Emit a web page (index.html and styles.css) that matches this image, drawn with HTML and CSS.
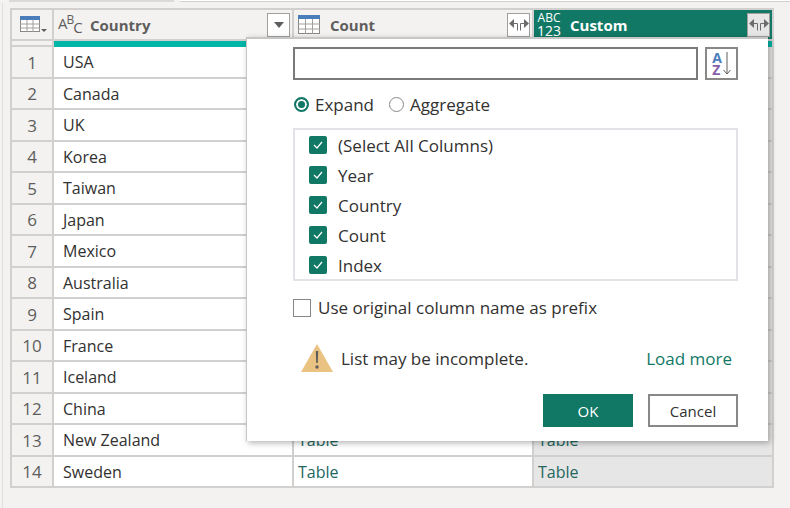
FILE: index.html
```html
<!DOCTYPE html>
<html lang="en">

<head>
    <meta charset="UTF-8">
    <title>Expand column</title>
    <link rel="stylesheet" href="styles.css">
</head>

<body>
    <div class="top-strip">
        <div class="strip-tab"></div>
        <div class="strip-bar"></div>
    </div>

    <div class="page">
        <div class="grid">
            <!-- header row -->
            <div class="head head-index">
                <svg width="27" height="17" viewBox="0 0 27 17">
                    <rect x="0.500" y="0.500" width="19" height="15" fill="#fff" stroke="#8a8886"/>
                    <rect x="0" y="0" width="20" height="4" fill="#4a7ebb"/>
                    <path d="M0 8h20M0 12h20M7 4v12M13 4v12" stroke="#a19f9d" fill="none"/>
                    <path d="M21 13h6l-3 3z" fill="#605e5c"/>
                </svg>
            </div>
            <div class="head">
                <span class="type-abc">A<sup>B</sup><sub>C</sub></span>
                <span class="head-title">Country</span>
                <span class="head-btn">
                    <svg width="10" height="6" viewBox="0 0 10 6"><path d="M0 0h10L5 6z" fill="#605e5c"/></svg>
                </span>
            </div>
            <div class="head">
                <svg class="type-table" width="22" height="19" viewBox="0 0 22 19">
                    <rect x="0.500" y="0.500" width="21" height="18" fill="#fff" stroke="#8a8886"/>
                    <rect x="0" y="0" width="22" height="4" fill="#4a7ebb"/>
                    <path d="M0 9h22M0 14h22M7.500 4v15M14.500 4v15" stroke="#a19f9d" fill="none"/>
                </svg>
                <span class="head-title">Count</span>
                <span class="head-btn">
                    <svg width="20" height="14" viewBox="0 0 20 14"><use href="#expand-icon"/></svg>
                </span>
            </div>
            <div class="head head-active">
                <span class="type-any"><span class="type-any-top">ABC</span><span class="type-any-low">123</span></span>
                <span class="head-title">Custom</span>
                <span class="head-btn">
                    <svg width="20" height="14" viewBox="0 0 20 14">
                        <g id="expand-icon" fill="#6e6c6a">
                            <path d="M0 5.500 5 1v9z"/>
                            <path d="M20 5.500 15 1v9z"/>
                            <path d="M5 5.500h3.500v7M15 5.500h-3.500v7" fill="none" stroke="#6e6c6a"/>
                        </g>
                    </svg>
                </span>
            </div>

            <!-- quality bar row -->
            <div class="quality-index"></div>
            <div class="quality-bar"></div>
            <div class="quality-bar"></div>
            <div class="quality-bar"></div>

            <!-- data rows -->
            <div class="num">1</div><div class="cell">USA</div><div class="cell"></div><div class="cell shade"></div>
            <div class="num">2</div><div class="cell">Canada</div><div class="cell"></div><div class="cell shade"></div>
            <div class="num">3</div><div class="cell">UK</div><div class="cell"></div><div class="cell shade"></div>
            <div class="num">4</div><div class="cell">Korea</div><div class="cell"></div><div class="cell shade"></div>
            <div class="num">5</div><div class="cell">Taiwan</div><div class="cell"></div><div class="cell shade"></div>
            <div class="num">6</div><div class="cell">Japan</div><div class="cell"></div><div class="cell shade"></div>
            <div class="num">7</div><div class="cell">Mexico</div><div class="cell"></div><div class="cell shade"></div>
            <div class="num">8</div><div class="cell">Australia</div><div class="cell"></div><div class="cell shade"></div>
            <div class="num">9</div><div class="cell">Spain</div><div class="cell"></div><div class="cell shade"></div>
            <div class="num">10</div><div class="cell">France</div><div class="cell"></div><div class="cell shade"></div>
            <div class="num">11</div><div class="cell">Iceland</div><div class="cell"></div><div class="cell shade"></div>
            <div class="num">12</div><div class="cell">China</div><div class="cell"></div><div class="cell shade"></div>
            <div class="num">13</div><div class="cell">New Zealand</div><div class="cell link">Table</div><div class="cell link shade">Table</div>
            <div class="num">14</div><div class="cell">Sweden</div><div class="cell link">Table</div><div class="cell link shade">Table</div>
        </div>
    </div>

    <div class="dialog">
        <div class="search-row">
            <div class="search-box"></div>
            <div class="sort-btn">
                <span class="sort-letters"><span class="sort-a">A</span><span class="sort-z">Z</span></span>
                <svg width="8" height="23" viewBox="0 0 8 23"><path d="M4 0v22M0.500 18 4 22 7.500 18" fill="none" stroke="#605e5c"/></svg>
            </div>
        </div>

        <div class="mode-row">
            <span class="radio radio-on"></span><span class="mode-label">Expand</span>
            <span class="radio"></span><span class="mode-label">Aggregate</span>
        </div>

        <div class="col-list">
            <div class="col-item"><span class="check"><svg width="10" height="8" viewBox="0 0 10 8"><path d="M1 4l3 3 5-6" fill="none" stroke="#fff" stroke-width="1.200"/></svg></span>(Select All Columns)</div>
            <div class="col-item"><span class="check"><svg width="10" height="8" viewBox="0 0 10 8"><path d="M1 4l3 3 5-6" fill="none" stroke="#fff" stroke-width="1.200"/></svg></span>Year</div>
            <div class="col-item"><span class="check"><svg width="10" height="8" viewBox="0 0 10 8"><path d="M1 4l3 3 5-6" fill="none" stroke="#fff" stroke-width="1.200"/></svg></span>Country</div>
            <div class="col-item"><span class="check"><svg width="10" height="8" viewBox="0 0 10 8"><path d="M1 4l3 3 5-6" fill="none" stroke="#fff" stroke-width="1.200"/></svg></span>Count</div>
            <div class="col-item"><span class="check"><svg width="10" height="8" viewBox="0 0 10 8"><path d="M1 4l3 3 5-6" fill="none" stroke="#fff" stroke-width="1.200"/></svg></span>Index</div>
        </div>

        <div class="prefix-row">
            <span class="check-empty"></span>Use original column name as prefix
        </div>

        <div class="warn-row">
            <svg width="32" height="28" viewBox="0 0 32 28">
                <path d="M16 0 32 28H0z" fill="#eac282"/>
                <path d="M14.800 7h2.400l-.4 12h-1.600z" fill="#605e5c"/>
                <circle cx="16" cy="23" r="1.700" fill="#605e5c"/>
            </svg>
            <span class="warn-text">List may be incomplete.</span>
            <span class="load-more">Load more</span>
        </div>

        <div class="btn-row">
            <div class="btn btn-ok">OK</div>
            <div class="btn btn-cancel">Cancel</div>
        </div>
    </div>
</body>

</html>
```

FILE: styles.css
```css
* {
    box-sizing: border-box;
}

body {
    margin: 0;
    width: 790px;
    height: 508px;
    overflow: hidden;
    position: relative;
    background-color: #f3f2f1;
    font-family: 'Open Sans', 'Noto Sans', sans-serif;
    color: #323130;
}

.top-strip {
    display: flex;
    height: 3px;
    padding-left: 9px;
    gap: 6px;
}

.strip-tab {
    width: 165px;
    height: 2px;
    background-color: #dcdad8;
}

.strip-bar {
    flex: 1;
    height: 2px;
    background-color: #fff;
    border-bottom: 1px solid #d2d0ce;
}

.page {
    height: 505px;
    margin-left: 2px;
    padding: 5px 0 0 7px;
    border-left: 1px solid #e1dfdd;
}

.grid {
    display: grid;
    width: 764px;
    grid-template-columns: 42px 240px 240px 238px;
    grid-template-rows: 31px 6px repeat(14, 31.5px);
    background-color: #d2d0ce;
    padding: 2px 2px 0 2px;
}

/* header */
.head {
    display: flex;
    align-items: center;
    background-color: #f3f2f1;
    border-right: 2px solid #d2d0ce;
    padding: 0 2px 0 4px;
    font-size: 15px;
    height: 29px;
}

.head-index {
    justify-content: center;
    padding: 0 0 0 2px;
}

.head-title {
    font-weight: 700;
    color: #605e5c;
    flex: 1;
    margin-left: 9px;
    padding-top: 1px;
}

.type-table + .head-title {
    margin-left: 10px;
}

.head-btn {
    display: flex;
    align-items: center;
    justify-content: center;
    width: 23px;
    height: 24px;
    margin-top: 1px;
    background-color: #fff;
    border: 1px solid #a19f9d;
}

.head-active {
    background-color: #117865;
    border-right: 0;
    padding-left: 3px;
}

.head-active .head-title {
    color: #fff;
}

.head-active .head-btn {
    background-color: #e6e6e6;
}

.type-abc {
    font-size: 15px;
    color: #605e5c;
    width: 23px;
    margin-bottom: 2px;
    line-height: 1;
    letter-spacing: -1px;
    white-space: nowrap;
}

.type-abc sup {
    font-size: 12px;
    vertical-align: 5px;
    line-height: 0;
}

.type-abc sub {
    font-size: 15px;
    vertical-align: -4px;
    line-height: 0;
}

.type-any {
    display: flex;
    flex-direction: column;
    align-items: center;
    color: #fff;
    width: 24px;
    padding-top: 1px;
    white-space: nowrap;
}

.type-any-top {
    font-size: 12px;
    line-height: 12px;
}

.type-any-low {
    font-size: 14px;
    line-height: 14px;
}

/* green strip below the header */
.quality-index {
    background-color: #f3f2f1;
    border-right: 2px solid #d2d0ce;
    margin-bottom: 2px;
}

.quality-bar {
    background-color: #00b7a7;
}

/* rows */
.num,
.cell {
    display: flex;
    align-items: center;
    padding-top: 1px;
    border-right: 2px solid #d2d0ce;
    border-bottom: 2px solid #d2d0ce;
    font-size: 16px;
}

.num {
    justify-content: center;
    background-color: #f3f2f1;
    color: #605e5c;
    font-size: 17px;
}

.cell {
    background-color: #fff;
    padding-left: 9px;
}

.cell.link {
    color: #24665f;
    padding-left: 4px;
}

.cell.shade {
    background-color: #e6e6e6;
    border-right: 0;
}

/* expand dialog */
.dialog {
    position: absolute;
    left: 246px;
    top: 37px;
    width: 522px;
    height: 404px;
    background-color: #fff;
    border-top: 2px solid #c8c6c4;
    border-left: 1px solid #c8c6c4;
    box-shadow: 2px 2px 6px rgba(0, 0, 0, 0.3);
    padding: 8px 30px 0 46px;
}

.search-row {
    display: flex;
    gap: 7px;
}

.search-box {
    width: 405px;
    height: 33px;
    border: 2px solid #7a7a7a;
}

.sort-btn {
    display: flex;
    align-items: center;
    justify-content: center;
    gap: 1px;
    width: 33px;
    height: 33px;
    border: 2px solid #8a8886;
}

.sort-letters {
    display: flex;
    flex-direction: column;
    font-weight: 700;
    font-size: 14px;
    line-height: 12px;
}

.sort-a {
    color: #4a7ebb;
}

.sort-z {
    color: #8661a8;
}

.mode-row {
    display: flex;
    align-items: center;
    margin-top: 11px;
    height: 26px;
    font-size: 17px;
}

.radio {
    width: 15px;
    height: 15px;
    border: 1px solid #8a8886;
    border-radius: 50%;
    margin-right: 6px;
    background-color: #fff;
}

.radio-on {
    margin-left: 1px;
    border: 2px solid #117865;
    background-color: #117865;
    box-shadow: inset 0 0 0 2px #fff;
}

.mode-label {
    margin-right: 15px;
    color: #323130;
}

.col-list {
    width: 445px;
    height: 153px;
    margin-top: 11px;
    border: 2px solid #e1e3e6;
    padding: 0 0 0 14px;
    font-size: 17px;
}

.col-item {
    display: flex;
    align-items: center;
    height: 30px;
}

.check {
    display: flex;
    align-items: center;
    justify-content: center;
    width: 18px;
    height: 18px;
    margin-right: 11px;
    border-radius: 2px;
    background-color: #117865;
}

.prefix-row {
    display: flex;
    align-items: center;
    margin-top: 15px;
    font-size: 17px;
}

.check-empty {
    width: 18px;
    height: 18px;
    margin-right: 7px;
    border: 1px solid #8a8886;
    background-color: #fff;
}

.warn-row {
    display: flex;
    align-items: center;
    margin-top: 25px;
    padding-left: 8px;
    font-size: 17px;
}

.warn-text {
    margin-left: 8px;
    flex: 1;
}

.load-more {
    color: #117865;
    margin-right: 6px;
}

.btn-row {
    display: flex;
    justify-content: flex-end;
    gap: 15px;
    margin-top: 22px;
    width: 445px;
}

.btn {
    display: flex;
    align-items: center;
    justify-content: center;
    width: 90px;
    height: 33px;
    font-size: 15px;
}

.btn-ok {
    background-color: #117865;
    color: #fff;
}

.btn-cancel {
    border: 2px solid #8a8886;
}
```
